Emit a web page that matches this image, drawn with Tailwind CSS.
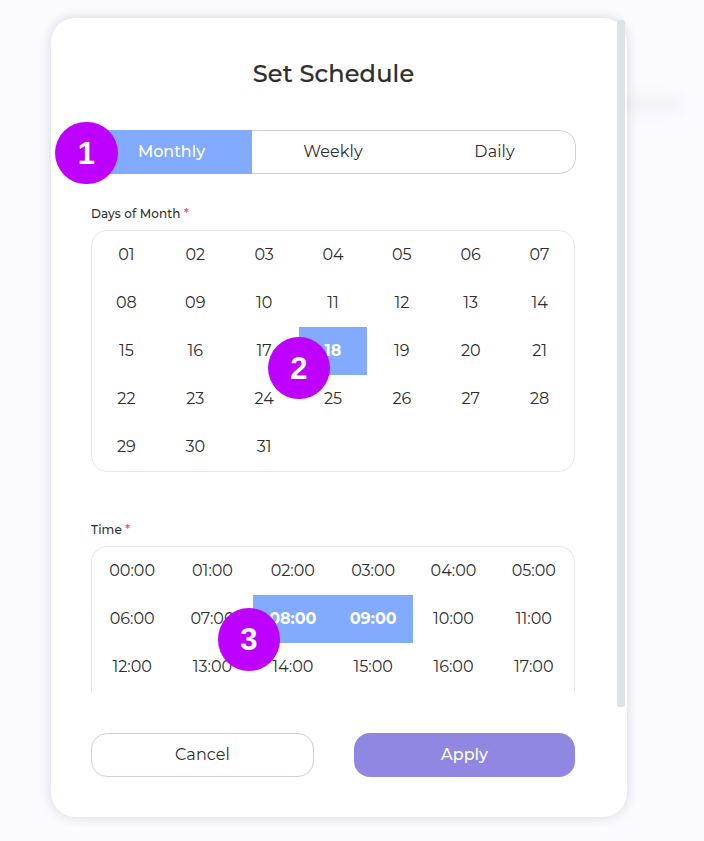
<!DOCTYPE html>
<html lang="en">
<head>
<meta charset="utf-8">
<title>Set Schedule</title>
<script src="https://cdn.jsdelivr.net/npm/@tailwindcss/browser@4"></script>
</head>
<body class="relative h-[841px] overflow-hidden bg-[#fbfaff] px-[51px] pt-[18px] font-[Montserrat,Inter,sans-serif] text-base text-[#2e2e2e]">
<div class="absolute left-[600px] top-[98px] h-3 w-[80px] bg-[#f1f0f5] blur-[7px]"></div>
<main class="relative flex h-[799px] w-[576px] flex-col rounded-[24px] bg-white pl-10 pr-[51px] shadow-[0_0_12px_rgba(40,40,60,0.17)]">
  <section class="h-[675px]">
    <h1 class="mt-[38px] text-center text-2xl font-medium leading-9 tracking-[0.18px] [-webkit-text-stroke:0.2px_#2e2e2e]">Set Schedule</h1>
    <div class="mt-[38px] grid h-11 grid-cols-[161px_162px_162px] overflow-hidden rounded-2xl text-center leading-[43px]">
      <div class="bg-[#82abff] font-medium text-white">Monthly</div>
      <div class="border-y border-[#d1d0da] leading-[41px] tracking-[0.15px]">Weekly</div>
      <div class="rounded-r-2xl border border-l-0 border-[#d1d0da] leading-[41px] tracking-[0.1px]">Daily</div>
    </div>
    <div class="mt-8 h-6 text-xs font-medium leading-4 tracking-[0.1px]">Days of Month <span class="text-[#f44]">*</span></div>
    <div id="days" class="mr-px grid grid-cols-7 rounded-2xl border border-[#e7e7e9] text-center leading-[47px]"></div>
    <div class="mt-[50px] h-6 text-xs font-medium leading-4 tracking-[0.1px]">Time <span class="text-[#f44]">*</span></div>
    <div id="times" class="mr-px grid h-[147px] grid-cols-6 content-start rounded-t-2xl border border-b-0 border-[#e7e7e9] text-center leading-[47px]"></div>
  </section>
  <footer class="mt-10 flex h-11 gap-10 text-center">
    <button class="w-[223px] rounded-2xl border border-[#d1d0da] pb-px tracking-[0.1px]">Cancel</button>
    <button class="w-[221px] rounded-2xl bg-[#9087e2] pb-px font-medium text-white">Apply</button>
  </footer>
  <div class="absolute left-[566px] top-[2px] h-[687px] w-2 rounded-[3px] bg-[#dee1e6]"></div>
</main>
<div class="absolute left-[55px] top-[121.7px] size-[62.5px] rounded-full bg-[#bd00ff] text-center font-['Liberation_Sans',sans-serif] text-[31px] font-bold leading-[63px] text-white">1</div>
<div class="absolute left-[267.7px] top-[336.7px] size-[62.5px] rounded-full bg-[#bd00ff] text-center font-['Liberation_Sans',sans-serif] text-[31px] font-bold leading-[63px] text-white">2</div>
<div class="absolute left-[217.7px] top-[608px] size-[62.5px] rounded-full bg-[#bd00ff] text-center font-['Liberation_Sans',sans-serif] text-[31px] font-bold leading-[63px] text-white">3</div>
<script>
  function fill(id, labels, selected) {
    const grid = document.getElementById(id);
    for (const label of labels) {
      const cell = document.createElement('div');
      cell.className = selected.includes(label) ? 'h-12 bg-[#82abff] font-bold text-white' : 'h-12';
      cell.textContent = label;
      grid.append(cell);
    }
  }
  const pad = n => String(n).padStart(2, '0');
  fill('days', Array.from({ length: 31 }, (_, i) => pad(i + 1)), ['18']);
  fill('times', Array.from({ length: 18 }, (_, i) => pad(i) + ':00'), ['08:00', '09:00']);
</script>
</body>
</html>
